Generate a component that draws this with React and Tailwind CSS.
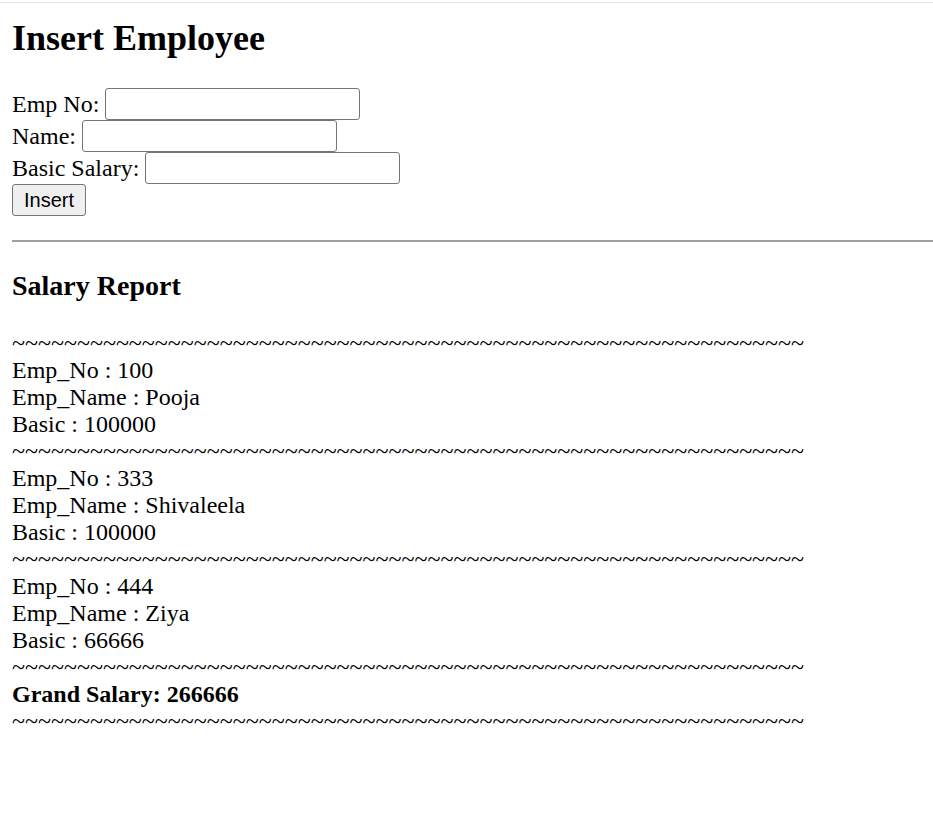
import React from 'react';

const employees = [
    { no: 100, name: 'Pooja', basic: 100000 },
    { no: 333, name: 'Shivaleela', basic: 100000 },
    { no: 444, name: 'Ziya', basic: 66666 },
];

const tildes = '~'.repeat(61);

const Field = ({ label }) => (
    <div className="flex items-center gap-[6px] h-[32px]">
        <span>{label}</span>
        <input
            type="text"
            className="w-[255px] h-[32px] border border-[#767676] rounded-[3px] bg-white outline-none"
        />
    </div>
);

const App = () => {
    const total = employees.reduce((sum, e) => sum + e.basic, 0);

    return (
        <div className="min-h-screen bg-white text-black font-['Liberation_Serif','Times_New_Roman',serif] text-[24px] leading-[27px]">
            <div className="pt-[2px]">
                <div className="h-px bg-[#f1dcf1]"></div>
            </div>
            <div className="pl-[12px]">
                <h1 className="mt-[15px] text-[36px] leading-[41px] font-bold">Insert Employee</h1>

                <form className="mt-[29px]" onSubmit={(e) => e.preventDefault()}>
                    <Field label="Emp No:" />
                    <Field label="Name:" />
                    <Field label="Basic Salary:" />
                    <button
                        type="submit"
                        className="h-[32px] px-[11px] bg-[#efefef] border border-[#767676] rounded-[3px] font-['Liberation_Sans',Arial,sans-serif] text-[20px] leading-[24px]"
                    >
                        Insert
                    </button>
                </form>

                <hr className="mt-[24px] border-0 border-t-[2px] border-t-[#a0a0a0]" />

                <h3 className="mt-[28px] text-[28px] leading-[32px] font-bold">Salary Report</h3>

                <div className="mt-[28px]">
                    <div>{tildes}</div>
                    {employees.map((e) => (
                        <div key={e.no}>
                            <div>Emp_No : {e.no}</div>
                            <div>Emp_Name : {e.name}</div>
                            <div>Basic : {e.basic}</div>
                            <div>{tildes}</div>
                        </div>
                    ))}
                    <div className="font-bold">Grand Salary: {total}</div>
                    <div>{tildes}</div>
                </div>
            </div>
        </div>
    );
};

export default App;
